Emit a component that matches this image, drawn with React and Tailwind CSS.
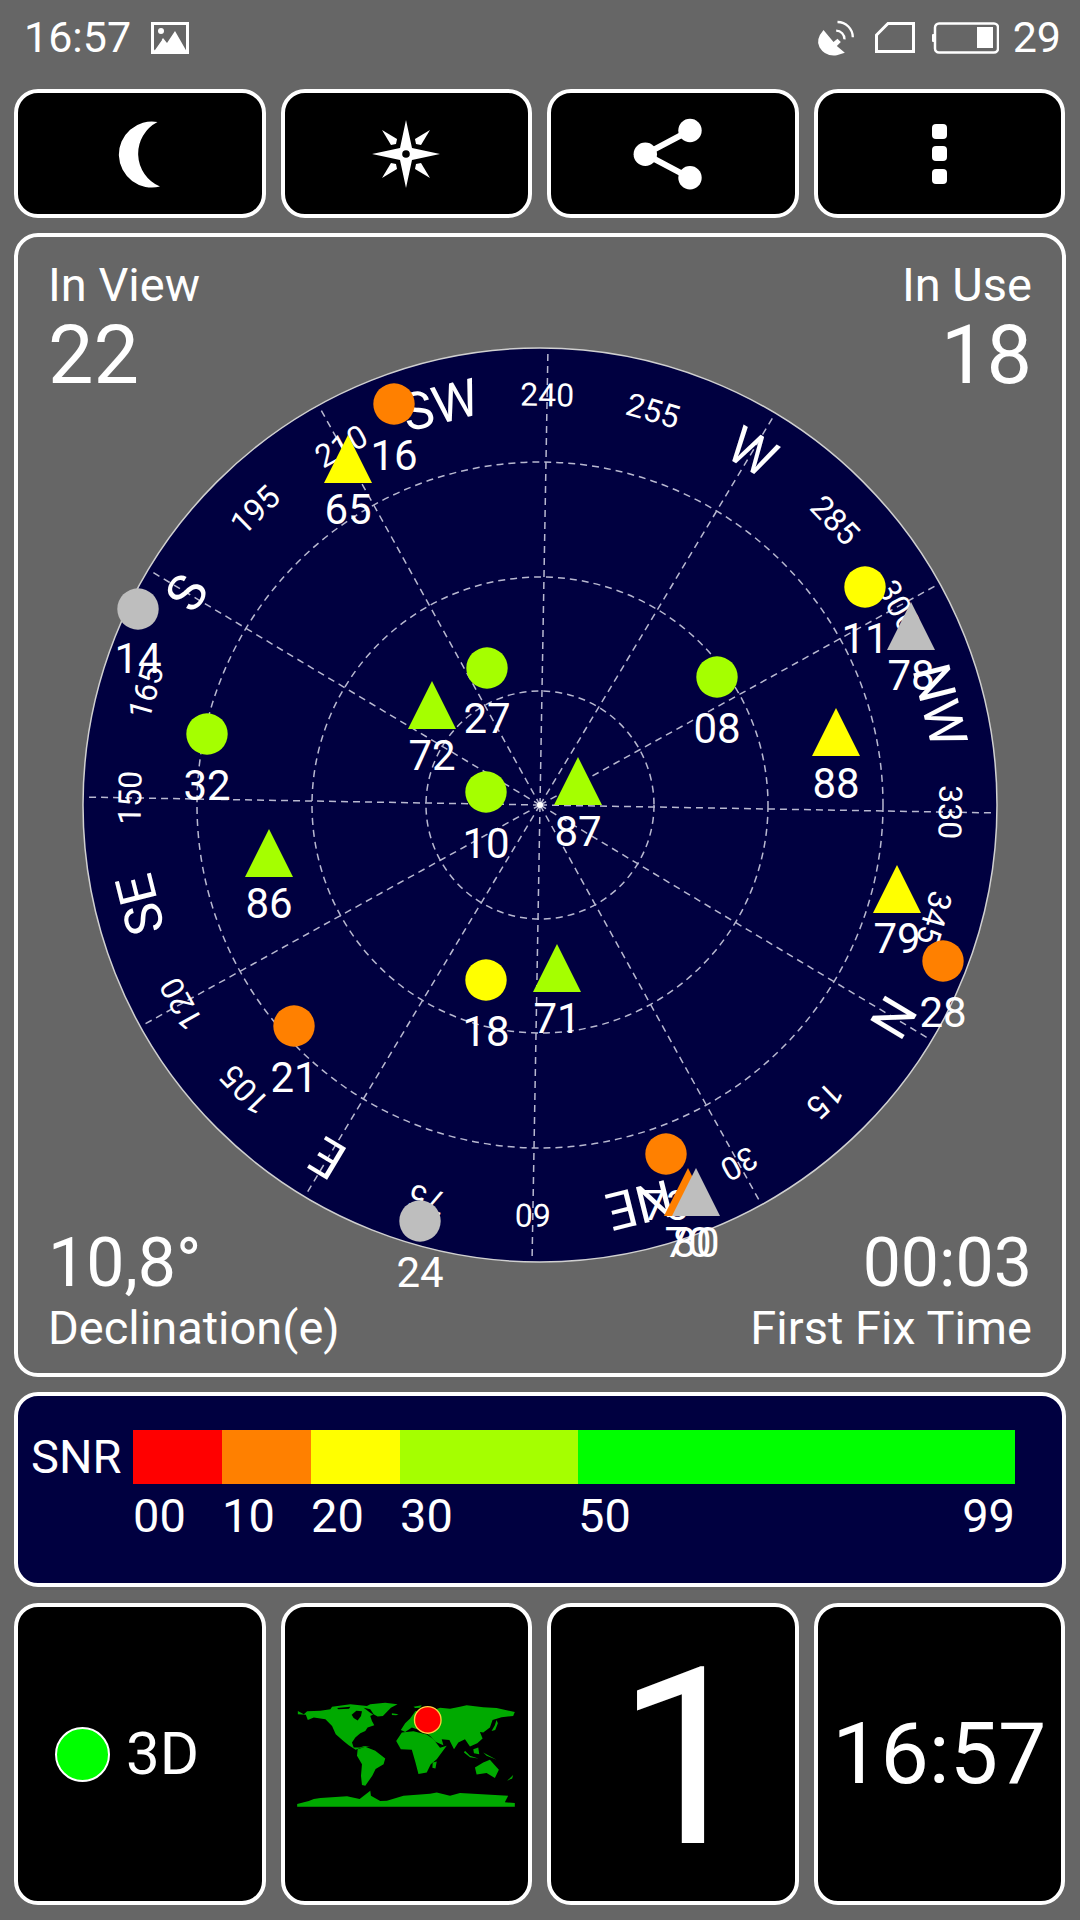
// GPS status screen: sky plot, SNR legend and fix info
const CX = 540;
const CY = 805;

const SIZE_COLORS = {
  orange: "#ff8000",
  yellow: "#ffff00",
  lime: "#a5ff00",
  gray: "#bebebe",
};

const COMPASS = [
  [0, "N"], [15, "15"], [30, "30"], [45, "NE"], [60, "60"], [75, "75"], [90, "E"], [105, "105"],
  [120, "120"], [135, "SE"], [150, "150"], [165, "165"], [180, "S"], [195, "195"], [210, "210"], [225, "SW"],
  [240, "240"], [255, "255"], [270, "W"], [285, "285"], [300, "300"], [315, "NW"], [330, "330"], [345, "345"],
];

// x, y = center of the marker, ly = center of the number
const CIRCLES = [
  { x: 394, y: 404, ly: 455, c: "orange", n: "16" },
  { x: 138, y: 609, ly: 658, c: "gray", n: "14" },
  { x: 207, y: 734, ly: 785, c: "lime", n: "32" },
  { x: 487, y: 668, ly: 718, c: "lime", n: "27" },
  { x: 486, y: 792, ly: 843, c: "lime", n: "10" },
  { x: 865, y: 587, ly: 638, c: "yellow", n: "11" },
  { x: 717, y: 677, ly: 728, c: "lime", n: "08" },
  { x: 486, y: 980, ly: 1031, c: "yellow", n: "18" },
  { x: 294, y: 1026, ly: 1077, c: "orange", n: "21" },
  { x: 420, y: 1221, ly: 1272, c: "gray", n: "24" },
  { x: 943, y: 961, ly: 1012, c: "orange", n: "28" },
  { x: 666, y: 1154, ly: 1205, c: "orange", n: "73" },
];

// x = center of the base, y = apex
const TRIANGLES = [
  { x: 348, y: 435, ly: 509, c: "yellow", n: "65" },
  { x: 432, y: 681, ly: 755, c: "lime", n: "72" },
  { x: 578, y: 757, ly: 831, c: "lime", n: "87" },
  { x: 836, y: 708, ly: 783, c: "yellow", n: "88" },
  { x: 269, y: 829, ly: 903, c: "lime", n: "86" },
  { x: 557, y: 944, ly: 1018, c: "lime", n: "71" },
  { x: 897, y: 865, ly: 938, c: "yellow", n: "79" },
  { x: 911, y: 602, ly: 675, c: "gray", n: "78" },
  { x: 688, y: 1168, ly: 1242, c: "orange", n: "70" },
  { x: 696, y: 1168, ly: 1242, c: "gray", n: "80" },
];

const SNR_SEGMENTS = [
  { label: "00", w: "w-[89px]", bg: "bg-[#ff0000]" },
  { label: "10", w: "w-[89px]", bg: "bg-[#ff8000]" },
  { label: "20", w: "w-[89px]", bg: "bg-[#ffff00]" },
  { label: "30", w: "w-[178px]", bg: "bg-[#a5ff00]" },
  { label: "50", w: "w-[437px]", bg: "bg-[#00ff00]" },
];

function SkyPlot() {
  const spokes = [];
  for (let a = 0; a < 360; a += 30) spokes.push(a + 1);

  return (
    <svg viewBox="18 237 1044 1136" className="w-[1044px] h-[1136px] [grid-area:1/1]">
      <circle cx={CX} cy={CY} r="457" fill="#000040" stroke="#d0d0d0" strokeWidth="1.5" />
      {[114, 228, 343].map((r) => (
        <circle key={r} cx={CX} cy={CY} r={r} fill="none" stroke="#b8b8d0" strokeWidth="1.5" strokeDasharray="7 5" />
      ))}
      {spokes.map((a) => (
        <line key={a} x1={CX} y1={CY} x2={CX} y2={CY - 456} transform={`rotate(${a} ${CX} ${CY})`} stroke="#b8b8d0" strokeWidth="1.5" strokeDasharray="7 5" />
      ))}
      <circle cx={CX} cy={CY} r="3" fill="#fff" />

      {COMPASS.map(([az, label]) => {
        const isLetter = isNaN(Number(label));
        return (
          <text
            key={az}
            x={CX}
            y={isLetter ? CY - 412 + 18 : CY - 410 + 11}
            fill="#fff"
            fontSize={isLetter ? 52 : 32}
            textAnchor="middle"
            transform={`rotate(${az - 239} ${CX} ${CY})`}
          >
            {label}
          </text>
        );
      })}

      {CIRCLES.map((s) => (
        <g key={s.n}>
          <circle cx={s.x} cy={s.y} r="20.7" fill={SIZE_COLORS[s.c]} />
          <text x={s.x} y={s.ly + 15} fill="#fff" fontSize="42" textAnchor="middle">
            {s.n}
          </text>
        </g>
      ))}
      {TRIANGLES.map((s) => (
        <g key={s.n}>
          <polygon points={`${s.x},${s.y} ${s.x + 24},${s.y + 48} ${s.x - 24},${s.y + 48}`} fill={SIZE_COLORS[s.c]} />
          <text x={s.x} y={s.ly + 15} fill="#fff" fontSize="42" textAnchor="middle">
            {s.n}
          </text>
        </g>
      ))}
    </svg>
  );
}

function WorldMap() {
  return (
    <svg viewBox="80 308 655 316" className="w-[218px] h-[105px]">
      <g fill="#00aa00">
        {/* north america + greenland */}
        <polygon points="82,335 100,345 110,336 150,334 180,330 185,322 240,315 290,320 300,315 345,310 382,315 362,325 338,350 322,352 310,345 300,350 305,365 312,378 292,385 285,395 270,402 255,415 245,430 250,445 268,445 280,441 300,441 272,446 256,452 235,438 220,426 196,405 185,380 165,360 130,355 112,362 106,346 82,345" />
        <polygon points="365,342 385,345 378,348 365,347" />
        {/* south america */}
        <polygon points="262,450 285,443 315,455 345,478 340,495 316,510 306,530 285,560 275,558 272,530 275,495 260,470" />
        {/* eurasia */}
        <polygon points="392,392 405,372 420,358 436,335 470,340 510,325 540,328 570,322 590,318 640,324 680,326 735,338 730,350 695,354 668,362 660,385 640,400 630,398 638,418 622,432 600,442 585,420 565,430 552,450 538,422 515,420 520,438 496,428 480,410 460,396 425,385 405,398" />
        <polygon points="430,322 455,318 450,325 435,326" />
        <polygon points="665,395 675,378 680,362 684,372 676,392" />
        {/* africa */}
        <polygon points="378,425 395,400 430,396 470,406 490,420 510,446 530,440 500,480 482,495 470,520 445,525 436,490 425,452 392,450" />
        <polygon points="488,490 500,487 496,508 487,506" />
        {/* islands */}
        <polygon points="585,455 600,470 625,478 600,474 582,460" />
        <polygon points="610,450 625,445 628,465 612,462" />
        <polygon points="640,460 680,482 650,470" />
        <polygon points="712,545 730,528 727,538" />
        {/* australia */}
        <polygon points="615,505 640,490 660,482 672,495 687,512 675,537 650,522 620,526" />
        {/* antarctica */}
        <polygon points="80,615 115,606 130,600 150,597 230,592 268,600 300,575 302,590 330,606 350,605 400,590 480,584 500,580 540,590 570,582 715,590 705,610 735,612 735,623 80,623" />
      </g>
      {/* hudson bay and arctic channels */}
      <g fill="#000">
        <polygon points="244,346 258,334 275,336 272,350 262,364 250,356" />
        <polygon points="280,325 300,330 312,348 300,340" />
        <polygon points="200,326 240,322 236,328 204,330" />
      </g>
      <circle cx="473" cy="362" r="40" fill="#ff0000" stroke="#ffd040" strokeWidth="4" />
    </svg>
  );
}

function ImageIcon() {
  return (
    <svg viewBox="0 0 38 32" className="w-[38px] h-[32px]">
      <rect x="1.5" y="1.5" width="35" height="29" fill="#666666" stroke="#fff" strokeWidth="3" />
      <circle cx="10" cy="9" r="3" fill="#fff" />
      <polygon points="2,30 12,16 16,21 24,9 36,30" fill="#fff" />
      <polygon points="3,24 9,16 11,18 4,28" fill="#666666" />
    </svg>
  );
}

function DishIcon() {
  return (
    <svg viewBox="45 20 125 120" className="w-[42px] h-[40px]">
      <path d="M70 56 Q45 85 58 108 Q75 137 110 132 L134 124 L110 104 L122 92 L112 82 L100 92 Z" fill="#fff" />
      <path d="M108 58 A25 25 0 0 1 133 84" fill="none" stroke="#fff" strokeWidth="7" />
      <path d="M112 32 A46 46 0 0 1 158 78" fill="none" stroke="#fff" strokeWidth="7" />
    </svg>
  );
}

function SimIcon() {
  return (
    <svg viewBox="0 0 40 31" className="w-[40px] h-[31px]">
      <path d="M13 1.5H38.5V29.5H1.5V13Z" fill="none" stroke="#fff" strokeWidth="3" />
    </svg>
  );
}

function BatteryIcon() {
  return (
    <svg viewBox="0 0 67 32" className="w-[67px] h-[32px]">
      <rect x="3" y="1.5" width="63" height="29" rx="4" fill="none" stroke="#fff" strokeWidth="2.5" />
      <rect x="0" y="12" width="3" height="8" rx="1" fill="#fff" />
      <rect x="45" y="5" width="16" height="21" fill="#fff" />
    </svg>
  );
}

function MoonIcon() {
  return (
    <svg viewBox="100 113.5 80 80" className="w-[80px] h-[80px]">
      <path d="M157.5 121.5A33 33 0 1 0 160 186A35.6 35.6 0 0 1 157.5 121.5Z" fill="#fff" />
    </svg>
  );
}

function CompassIcon() {
  return (
    <svg viewBox="-40 -40 80 80" className="w-[80px] h-[80px]">
      <polygon points="0,-34 6,-6 34,0 6,6 0,34 -6,6 -34,0 -6,-6" fill="#fff" />
      <circle r="8" fill="#fff" />
      <circle r="3.8" fill="#000" />
      {[0, 90, 180, 270].map((a) => (
        <polygon key={a} points="-24,-24 -9,-15 -10,-10 -15,-9" fill="#fff" transform={`rotate(${a})`} />
      ))}
    </svg>
  );
}

function ShareIcon() {
  return (
    <svg viewBox="628 113.5 80 80" className="w-[80px] h-[80px] -translate-x-[5px]">
      <path d="M690 130L645.3 153.7L690 177.3" fill="none" stroke="#fff" strokeWidth="6" />
      <circle cx="690" cy="130" r="11.7" fill="#fff" />
      <circle cx="645.3" cy="153.7" r="11.7" fill="#fff" />
      <circle cx="690" cy="177.3" r="11.7" fill="#fff" />
    </svg>
  );
}

function DotsIcon() {
  return (
    <div className="flex flex-col gap-[7.5px]">
      <div className="w-[15px] h-[15px] bg-white rounded-[4px]" />
      <div className="w-[15px] h-[15px] bg-white rounded-[4px]" />
      <div className="w-[15px] h-[15px] bg-white rounded-[4px]" />
    </div>
  );
}

function Card({ className = "", children }) {
  return <div className={`border-[4px] border-white rounded-[24px] bg-black flex items-center justify-center overflow-hidden ${className}`}>{children}</div>;
}

export default function App() {
  return (
    <div className="w-[1080px] h-[1920px] bg-[#666666] text-white font-[Roboto,sans-serif] flex flex-col overflow-hidden">
      {/* Status bar */}
      <div className="h-[75px] mb-[14px] pl-[24px] pr-[19px] flex items-center justify-between text-[43px] leading-none">
        <div className="flex items-center gap-[20px]">
          <span>16:57</span>
          <ImageIcon />
        </div>
        <div className="flex items-center">
          <DishIcon />
          <div className="ml-[18px]">
            <SimIcon />
          </div>
          <div className="ml-[17px]">
            <BatteryIcon />
          </div>
          <span className="ml-[14px]">29</span>
        </div>
      </div>

      <div className="flex-1 px-[14px] flex flex-col gap-[15px]">
        {/* Toolbar */}
        <div className="grid grid-cols-4 gap-[15px] h-[129px] mr-px">
          <Card><MoonIcon /></Card>
          <Card><CompassIcon /></Card>
          <Card><ShareIcon /></Card>
          <Card><DotsIcon /></Card>
        </div>

        {/* Sky plot */}
        <div className="h-[1144px] border-[4px] border-white rounded-[24px] grid overflow-hidden">
          <SkyPlot />
          <div className="[grid-area:1/1] z-10 px-[30px] pt-[23px] pb-[20px] flex flex-col justify-between">
            <div className="flex justify-between">
              <div>
                <div className="text-[47px] leading-[50px]">In View</div>
                <div className="text-[81px] leading-[90px] mt-px">22</div>
              </div>
              <div className="text-right">
                <div className="text-[47px] leading-[50px]">In Use</div>
                <div className="text-[81px] leading-[90px] mt-px">18</div>
              </div>
            </div>
            <div className="flex justify-between">
              <div>
                <div className="text-[68px] leading-[80px]">10,8°</div>
                <div className="text-[47px] leading-[50px]">Declination(e)</div>
              </div>
              <div className="text-right">
                <div className="text-[68px] leading-[80px]">00:03</div>
                <div className="text-[47px] leading-[50px]">First Fix Time</div>
              </div>
            </div>
          </div>
        </div>

        {/* SNR legend */}
        <div className="h-[195px] border-[4px] border-white rounded-[24px] bg-[#000040] pt-[34px] pl-[14px] flex">
          <div className="w-[102px] text-[47px] leading-[54px] -ml-px">SNR</div>
          <div className="w-[882px]">
            <div className="flex h-[54px]">
              {SNR_SEGMENTS.map((s) => (
                <div key={s.label} className={`${s.w} ${s.bg}`} />
              ))}
            </div>
            <div className="flex mt-[7px] text-[47px] leading-[50px]">
              {SNR_SEGMENTS.map((s) => (
                <div key={s.label} className={s.w}>
                  {s.label}
                </div>
              ))}
            </div>
            <div className="-mt-[50px] text-right text-[47px] leading-[50px]">99</div>
          </div>
        </div>

        {/* Fix info */}
        <div className="grid grid-cols-4 gap-[15px] h-[302px] mt-px mr-px">
          <Card className="justify-start pl-[37px] gap-[16px]">
            <div className="w-[55px] h-[55px] rounded-full bg-[#00ff00] border-2 border-white" />
            <span className="text-[60px] leading-none">3D</span>
          </Card>
          <Card><WorldMap /></Card>
          <Card className="pl-[26px] pt-[10px]"><span className="text-[246px] leading-none">1</span></Card>
          <Card><span className="text-[86px] leading-none">16:57</span></Card>
        </div>
      </div>
    </div>
  );
}
